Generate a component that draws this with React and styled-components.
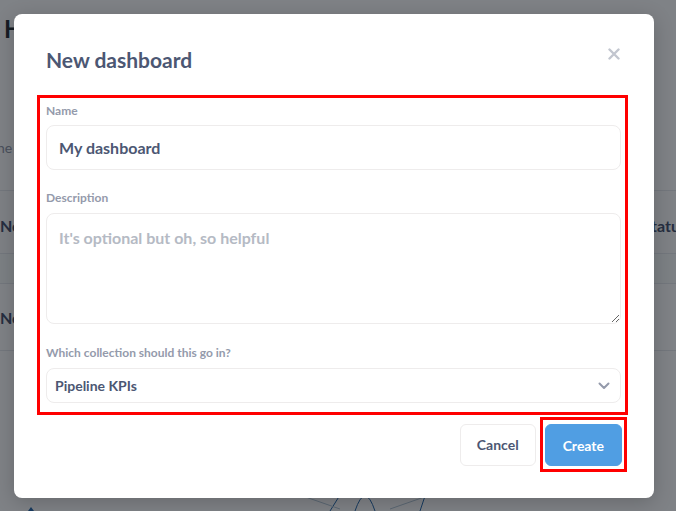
import React from "react";
import styled, { createGlobalStyle } from "styled-components";

const Global = createGlobalStyle`
  html, body { margin: 0; padding: 0; }
  body {
    width: 676px;
    height: 511px;
    overflow: hidden;
    font-family: Lato, "Noto Sans", "Liberation Sans", sans-serif;
    background: #ffffff;
  }
  * { box-sizing: border-box; }
`;

const Page = styled.div`
  position: relative;
  width: 676px;
  height: 511px;
  overflow: hidden;
  background: #ffffff;
  color: #2e353b;
`;

const PageHeading = styled.div`
  padding: 14px 0 0 4px;
  font-size: 24px;
  font-weight: 700;
  color: #2e353b;
  height: 138px;
`;

const PageSub = styled.div`
  margin-left: -8px;
  font-size: 14px;
  color: #949aab;
  height: 52px;
  line-height: 20px;
`;

const TableRow = styled.div`
  display: flex;
  justify-content: space-between;
  align-items: center;
  height: ${(p) => p.$h}px;
  border-top: 1px solid #e6e8ec;
  background: ${(p) => p.$bg || "#ffffff"};
  font-size: 16px;
  font-weight: 700;
  color: #4c5773;
  padding-top: ${(p) => p.$pt || 0}px;
`;

const RightCell = styled.span`
  margin-right: -11px;
`;

const ChartArea = styled.div`
  position: absolute;
  left: 0;
  bottom: 0;
  width: 676px;
  height: 60px;
`;

const Overlay = styled.div`
  position: absolute;
  inset: 0;
  background: rgba(0, 5, 13, 0.5);
  display: flex;
  align-items: flex-start;
  justify-content: flex-start;
  padding: 14px 0 0 14px;
`;

const Modal = styled.div`
  width: 640px;
  height: 484px;
  background: #ffffff;
  border-radius: 8px;
  box-shadow: 0 4px 20px rgba(0, 0, 0, 0.2);
  padding: 33px 32px 0 23px;
  display: flex;
  flex-direction: column;
`;

const Header = styled.div`
  display: flex;
  justify-content: space-between;
  align-items: flex-start;
  padding-left: 9px;
  margin-bottom: 22px;
`;

const Title = styled.h2`
  margin: 0;
  font-size: 21px;
  line-height: 26px;
  font-weight: 700;
  color: #4c5773;
`;

const CloseButton = styled.button`
  border: none;
  background: transparent;
  padding: 0;
  margin: 0 1px 0 0;
  width: 14px;
  height: 14px;
  display: flex;
  align-items: center;
  justify-content: center;
  cursor: pointer;
`;

const Highlight = styled.div`
  border: 3px solid #ff0000;
  padding: 6px 4px 9px 6px;
  width: 591px;
`;

const Field = styled.div`
  display: flex;
  flex-direction: column;
  margin-top: ${(p) => p.$mt || 0}px;
`;

const Label = styled.label`
  font-size: 12px;
  line-height: 14px;
  font-weight: 700;
  color: #949aab;
  margin-bottom: ${(p) => p.$mb || 7}px;
`;

const TextInput = styled.input`
  height: 45px;
  width: 100%;
  border: 1px solid #eeecec;
  border-radius: 8px;
  padding: 0 12px;
  font-family: inherit;
  font-size: 16px;
  font-weight: 700;
  color: #4c5773;
  outline: none;
  background: #fff;
`;

const TextArea = styled.textarea`
  height: 111px;
  width: 100%;
  border: 1px solid #eeecec;
  border-radius: 8px;
  padding: 14px 12px;
  font-family: inherit;
  font-size: 16px;
  line-height: 20px;
  font-weight: 700;
  color: #4c5773;
  outline: none;
  resize: vertical;
  &::placeholder {
    color: #b5bac4;
    font-weight: 700;
  }
`;

const Select = styled.div`
  height: 35px;
  width: 100%;
  border: 1px solid #eeecec;
  border-radius: 8px;
  padding: 0 10px 0 8px;
  display: flex;
  align-items: center;
  justify-content: space-between;
  font-size: 14px;
  font-weight: 700;
  color: #4c5773;
`;

const Footer = styled.div`
  display: flex;
  justify-content: flex-end;
  align-items: center;
  gap: 4px;
  margin-top: 2px;
  margin-right: -5px;
`;

const Button = styled.button`
  height: 42px;
  padding: 0 ${(p) => (p.$primary ? 17 : 16)}px;
  border-radius: 6px;
  border: 1px solid ${(p) => (p.$primary ? "#509ee3" : "#eeecec")};
  background: ${(p) => (p.$primary ? "#509ee3" : "#ffffff")};
  color: ${(p) => (p.$primary ? "#ffffff" : "#4c5773")};
  font-family: inherit;
  font-size: 14px;
  font-weight: 700;
  cursor: pointer;
`;

const ButtonHighlight = styled.div`
  border: 3px solid #ff0000;
  padding: 4px 2px 3px 2px;
  display: flex;
`;

export default function App() {
  return (
    <Page>
      <Global />
      <PageHeading>Home</PageHeading>
      <PageSub>the</PageSub>
      <TableRow $h={63} $pt={6} $bg="#fcfcfd">
        <span>Nothing</span>
        <RightCell>Status</RightCell>
      </TableRow>
      <TableRow $h={30} $bg="#f9fafb" />
      <TableRow $h={67}>
        <span>Nothing</span>
      </TableRow>
      <TableRow $h={10} />
      <ChartArea>
        <svg width="676" height="60" viewBox="0 0 676 60">
          <rect x="205" y="40" width="45" height="6" fill="#dbe6ef" />
          <path d="M330 60 L340 44 M420 60 L425 45" stroke="#2f6fb0" strokeWidth="1" fill="none" />
          <path d="M355 60 Q365 30 375 60" stroke="#2f6fb0" strokeWidth="1" fill="none" />
          <path d="M300 44 L340 58 M390 58 L430 44" stroke="#b8c9d8" strokeWidth="1" fill="none" />
          <path d="M28 60 L31 56 L34 60 Z" fill="#2f6fb0" />
        </svg>
      </ChartArea>
      <Overlay>
        <Modal>
          <Header>
            <Title>New dashboard</Title>
            <CloseButton aria-label="Close">
              <svg width="12" height="12" viewBox="0 0 12 12">
                <path d="M1.5 1.5 L10.5 10.5 M10.5 1.5 L1.5 10.5" stroke="#c2c6cf" strokeWidth="2.4" strokeLinecap="round" />
              </svg>
            </CloseButton>
          </Header>
          <Highlight>
            <Field>
              <Label>Name</Label>
              <TextInput defaultValue="My dashboard" />
            </Field>
            <Field $mt={21}>
              <Label $mb={8}>Description</Label>
              <TextArea placeholder="It's optional but oh, so helpful" />
            </Field>
            <Field $mt={22}>
              <Label $mb={8}>Which collection should this go in?</Label>
              <Select>
                <span>Pipeline KPIs</span>
                <svg width="12" height="8" viewBox="0 0 12 8">
                  <path d="M1.5 1.5 L6 6 L10.5 1.5" stroke="#949aab" strokeWidth="2" fill="none" strokeLinecap="round" strokeLinejoin="round" />
                </svg>
              </Select>
            </Field>
          </Highlight>
          <Footer>
            <Button>Cancel</Button>
            <ButtonHighlight>
              <Button $primary>Create</Button>
            </ButtonHighlight>
          </Footer>
        </Modal>
      </Overlay>
    </Page>
  );
}
